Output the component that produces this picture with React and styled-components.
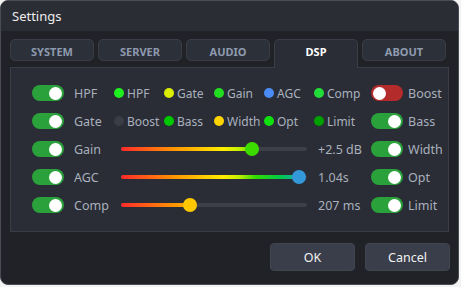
import React from "react";
import styled, { createGlobalStyle } from "styled-components";

const GlobalStyle = createGlobalStyle`
  html, body {
    margin: 0;
    padding: 0;
    background: #f3f3f3;
    font-family: "Noto Sans", "Open Sans", sans-serif;
  }
`;

const Window = styled.div`
  width: 459px;
  height: 285px;
  box-sizing: border-box;
  border: 1px solid #4a4c54;
  border-radius: 8px;
  overflow: hidden;
  background: #212228;
  display: flex;
  flex-direction: column;
`;

const TitleBar = styled.div`
  height: 30px;
  background: #2b2d34;
  color: #ececec;
  font-size: 13px;
  display: flex;
  align-items: center;
  padding-left: 11px;
`;

const TabRow = styled.div`
  display: flex;
  align-items: flex-start;
  gap: 4px;
  margin-top: 8px;
  padding-left: 9px;
  height: 28px;
`;

const Tab = styled.div`
  position: relative;
  z-index: 1;
  width: 84px;
  box-sizing: border-box;
  height: ${(p) => (p.$active ? "29px" : "22px")};
  line-height: 20px;
  padding-top: 2px;
  text-align: center;
  font-size: 11px;
  font-weight: 700;
  color: ${(p) => (p.$active ? "#ffffff" : "#8e9aae")};
  background: ${(p) => (p.$active ? "#2a2d35" : "#2c3039")};
  border: 1px solid #3a3d47;
  border-bottom: ${(p) => (p.$active ? "none" : "1px solid #3a3d47")};
  border-radius: ${(p) => (p.$active ? "5px 5px 0 0" : "5px")};
`;

const Panel = styled.div`
  margin: 0 9px;
  background: #2a2d35;
  border: 1px solid #3a3d46;
  padding: 11px 0 12px 21px;
`;

const Row = styled.div`
  display: grid;
  grid-template-columns: 42px 40px 257px 37px 1fr;
  align-items: center;
  height: 28px;
  font-size: 12.5px;
  color: #a9b0bd;
`;

const Switch = styled.div`
  width: 32px;
  height: 16px;
  border-radius: 8px;
  background: ${(p) => (p.$on ? "#2aa13b" : "#b32b2b")};
  display: flex;
  align-items: center;
  justify-content: ${(p) => (p.$on ? "flex-end" : "flex-start")};
  padding: 0 2px;
  box-sizing: border-box;

  &::after {
    content: "";
    width: 13px;
    height: 13px;
    border-radius: 50%;
    background: #ffffff;
  }
`;

const Label = styled.span`
  white-space: nowrap;
`;

const Indicators = styled.div`
  display: flex;
  font-size: 12px;
`;

const Indicator = styled.div`
  width: 50px;
  display: flex;
  align-items: center;
  gap: 3px;
  white-space: nowrap;
`;

const Dot = styled.span`
  width: 10px;
  height: 10px;
  border-radius: 50%;
  background: ${(p) => p.$color};
  flex: none;
`;

const SliderBox = styled.div`
  display: flex;
  align-items: center;
  padding-left: 7px;
`;

const Track = styled.div`
  position: relative;
  width: 186px;
  height: 4px;
  border-radius: 2px;
  background: #3d3f49;
`;

const Fill = styled.div`
  height: 100%;
  border-radius: 2px;
  background: linear-gradient(
    90deg,
    #ff2a2a 0%,
    #ff9a00 30%,
    #ffee00 55%,
    #c8f000 63%,
    #35dc00 72%,
    #00c84a 86%,
    #2a9be0 100%
  );
  background-size: 186px 100%;
`;

const Knob = styled.span`
  position: absolute;
  top: 50%;
  width: 14px;
  height: 14px;
  border-radius: 50%;
  background: ${(p) => p.$color};
  transform: translate(-50%, -50%);
`;

const Value = styled.span`
  margin-left: 11px;
  white-space: nowrap;
`;

const Footer = styled.div`
  display: flex;
  justify-content: flex-end;
  gap: 10px;
  margin-top: 11px;
  padding-right: 8px;
`;

const Button = styled.div`
  width: 85px;
  height: 28px;
  box-sizing: border-box;
  border-radius: 4px;
  background: #3a3e4b;
  border: 1px solid #41454f;
  color: #f2f2f2;
  font-size: 12.5px;
  display: flex;
  align-items: center;
  justify-content: center;
`;

const tabs = ["SYSTEM", "SERVER", "AUDIO", "DSP", "ABOUT"];

const row1 = [
  ["HPF", "#1ff01f"],
  ["Gate", "#dcee00"],
  ["Gain", "#22dc22"],
  ["AGC", "#4a8cf5"],
  ["Comp", "#22dc3a"],
];

const row2 = [
  ["Boost", "#3a3c46"],
  ["Bass", "#00c800"],
  ["Width", "#ffd400"],
  ["Opt", "#10e010"],
  ["Limit", "#00a000"],
];

const sliders = [
  ["Gain", 0.704, "#3cdc00", "+2.5 dB", "Width"],
  ["AGC", 0.955, "#3399d9", "1.04s", "Opt"],
  ["Comp", 0.373, "#ffc800", "207 ms", "Limit"],
];

const IndicatorRow = ({ name, items, rightOn, rightName }) => (
  <Row>
    <Switch $on />
    <Label>{name}</Label>
    <Indicators>
      {items.map(([n, c]) => (
        <Indicator key={n}>
          <Dot $color={c} />
          {n}
        </Indicator>
      ))}
    </Indicators>
    <Switch $on={rightOn} />
    <Label>{rightName}</Label>
  </Row>
);

const SliderRow = ({ name, value, color, text, rightName }) => (
  <Row>
    <Switch $on />
    <Label>{name}</Label>
    <SliderBox>
      <Track>
        <Fill style={{ width: `${value * 100}%` }} />
        <Knob $color={color} style={{ left: `${value * 100}%` }} />
      </Track>
      <Value>{text}</Value>
    </SliderBox>
    <Switch $on />
    <Label>{rightName}</Label>
  </Row>
);

export default function App() {
  return (
    <>
      <GlobalStyle />
      <Window>
        <TitleBar>Settings</TitleBar>
        <TabRow>
          {tabs.map((t) => (
            <Tab key={t} $active={t === "DSP"}>
              {t}
            </Tab>
          ))}
        </TabRow>
        <Panel>
          <IndicatorRow name="HPF" items={row1} rightOn={false} rightName="Boost" />
          <IndicatorRow name="Gate" items={row2} rightOn rightName="Bass" />
          {sliders.map(([n, v, c, t, r]) => (
            <SliderRow key={n} name={n} value={v} color={c} text={t} rightName={r} />
          ))}
        </Panel>
        <Footer>
          <Button>OK</Button>
          <Button>Cancel</Button>
        </Footer>
      </Window>
    </>
  );
}
